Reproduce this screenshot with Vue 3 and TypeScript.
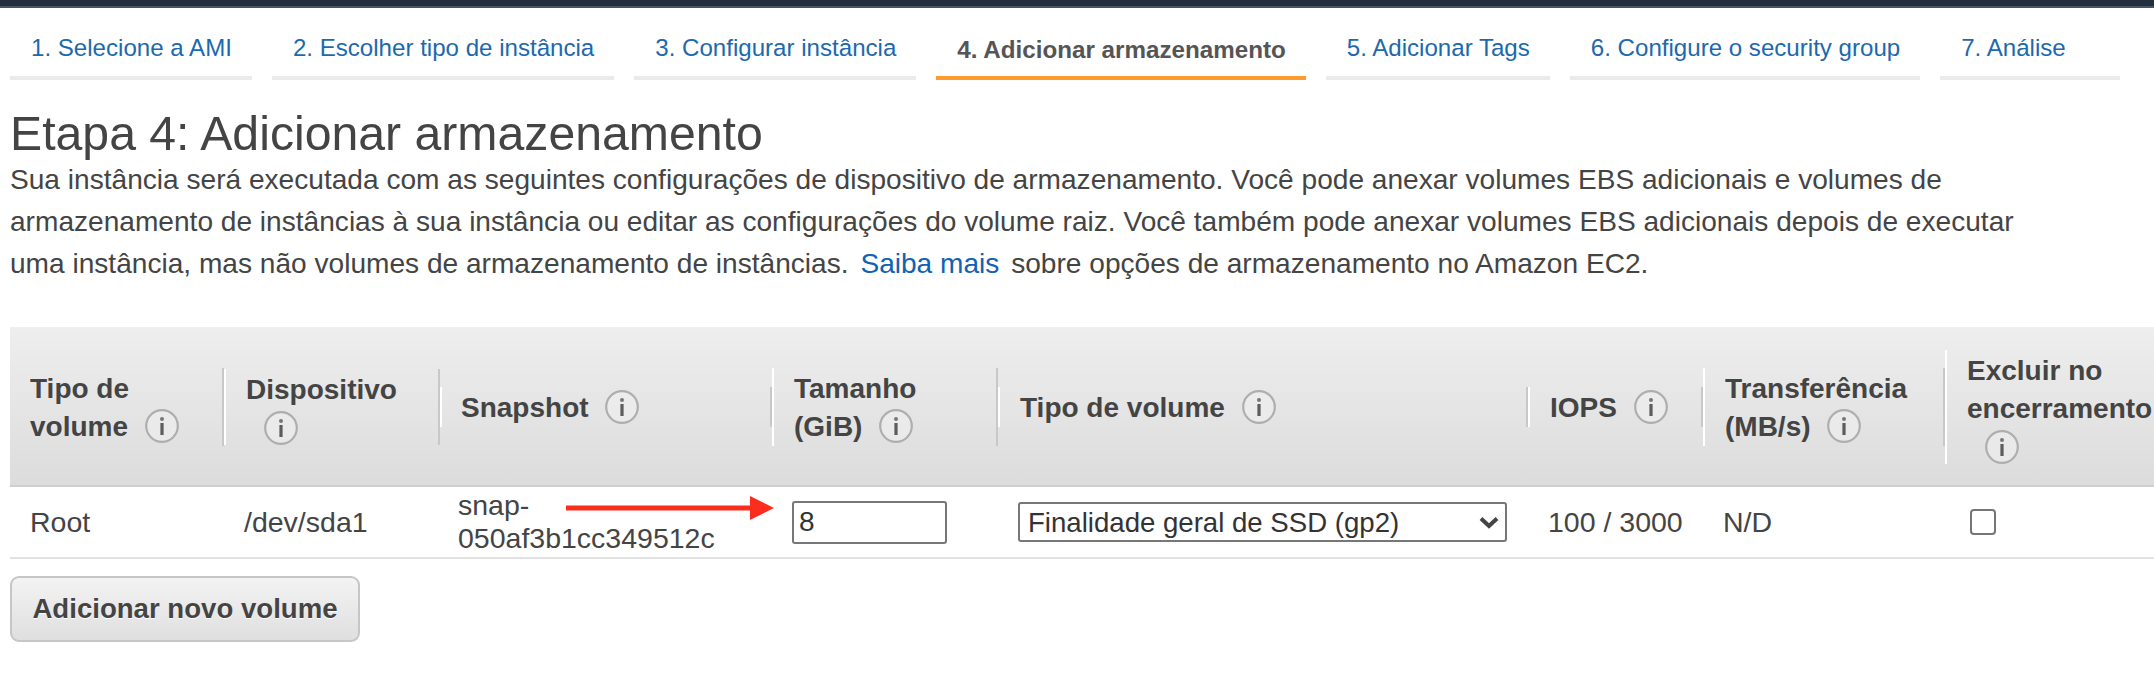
<script setup lang="ts">
interface Tab {
  label: string;
  active?: boolean;
}

interface Column {
  lines: string[];
  width: number;
  iconOwnLine?: boolean;
}

const tabs: Tab[] = [
  { label: '1. Selecione a AMI' },
  { label: '2. Escolher tipo de instância' },
  { label: '3. Configurar instância' },
  { label: '4. Adicionar armazenamento', active: true },
  { label: '5. Adicionar Tags' },
  { label: '6. Configure o security group' },
  { label: '7. Análise' }
];

const columns: Column[] = [
  { lines: ['Tipo de', 'volume'], width: 214 },
  { lines: ['Dispositivo'], width: 216, iconOwnLine: true },
  { lines: ['Snapshot'], width: 332 },
  { lines: ['Tamanho', '(GiB)'], width: 226 },
  { lines: ['Tipo de volume'], width: 530 },
  { lines: ['IOPS'], width: 175 },
  { lines: ['Transferência', '(MB/s)'], width: 242 },
  { lines: ['Excluir no', 'encerramento'], width: 240, iconOwnLine: true }
];
</script>

<template>
  <div class="page">
    <div class="topbar"></div>

    <nav class="tabs">
      <a v-for="tab in tabs" :key="tab.label" :class="['tab', { active: tab.active }]">{{ tab.label }}</a>
    </nav>

    <h1 class="title">Etapa 4: Adicionar armazenamento</h1>
    <p class="intro">
      Sua instância será executada com as seguintes configurações de dispositivo de armazenamento. Você pode anexar volumes EBS adicionais e volumes de<br />
      armazenamento de instâncias à sua instância ou editar as configurações do volume raiz. Você também pode anexar volumes EBS adicionais depois de executar<br />
      uma instância, mas não volumes de armazenamento de instâncias. <a class="link">Saiba mais</a> sobre opções de armazenamento no Amazon EC2.
    </p>

    <div class="table-wrap">
      <table class="volumes">
        <colgroup>
          <col v-for="col in columns" :key="col.lines[0]" :style="{ width: col.width + 'px' }" />
        </colgroup>
        <thead>
          <tr>
            <th v-for="col in columns" :key="col.lines[0]">
              <div class="th-inner">
                <template v-for="(line, i) in col.lines" :key="line">
                  <span class="th-line">
                    {{ line }}
                    <svg v-if="i === col.lines.length - 1 && !col.iconOwnLine" class="info" viewBox="0 0 34 34">
                      <circle cx="17" cy="17" r="15.8" fill="#f0f0f0" fill-opacity="0.55" stroke="#aeaeae" stroke-width="2.2" />
                      <circle cx="17" cy="10" r="2" fill="#777" />
                      <rect x="15.4" y="14" width="3.2" height="12" fill="#5c5c5c" />
                    </svg>
                  </span>
                </template>
                <span v-if="col.iconOwnLine" class="th-line icon-line">
                  <svg class="info" viewBox="0 0 34 34">
                    <circle cx="17" cy="17" r="15.8" fill="#f0f0f0" fill-opacity="0.55" stroke="#aeaeae" stroke-width="2.2" />
                    <circle cx="17" cy="10" r="2" fill="#777" />
                    <rect x="15.4" y="14" width="3.2" height="12" fill="#5c5c5c" />
                  </svg>
                </span>
              </div>
            </th>
          </tr>
        </thead>
        <tbody>
          <tr>
            <td class="c-type">Root</td>
            <td class="c-device">/dev/sda1</td>
            <td class="c-snap">snap-<br />050af3b1cc349512c</td>
            <td class="c-size"><input class="size-input" type="text" value="8" /></td>
            <td class="c-voltype">
              <div class="select-wrap">
                <select class="type-select">
                  <option>Finalidade geral de SSD (gp2)</option>
                </select>
                <svg class="chevron" width="20" height="13" viewBox="0 0 20 13">
                  <path d="M2 2.5 L10 10 L18 2.5" fill="none" stroke="#444" stroke-width="4" />
                </svg>
              </div>
            </td>
            <td class="c-iops">100 / 3000</td>
            <td class="c-through">N/D</td>
            <td class="c-delete"><input class="check" type="checkbox" /></td>
          </tr>
        </tbody>
      </table>

      <svg class="arrow" width="210" height="26" viewBox="0 0 210 26">
        <rect x="0" y="10.5" width="186" height="5" fill="#fa2d1e" />
        <polygon points="184,1 208,13 184,25" fill="#fa2d1e" />
      </svg>
    </div>

    <button class="add-btn" type="button">Adicionar novo volume</button>
  </div>
</template>

<style>
html,
body {
  margin: 0;
  background: #fff;
  overflow: hidden;
}
</style>

<style scoped>
.page {
  width: 2154px;
  height: 680px;
  overflow: hidden;
  font-family: "Liberation Sans", Arial, sans-serif;
  color: #444;
  background: #fff;
}

.topbar {
  height: 6px;
  background: #232f3e;
  border-bottom: 2px solid #4a5563;
}

.tabs {
  display: flex;
  gap: 20px;
  align-items: flex-end;
  height: 72px;
  padding-left: 10px;
}

.tab {
  box-sizing: border-box;
  min-width: 180px;
  height: 72px;
  padding: 26px 20px 0 21px;
  border-bottom: 4px solid #ebebeb;
  font-size: 24.1px;
  line-height: 28px;
  color: #1c69ad;
  white-space: nowrap;
}

.tab.active {
  padding: 28px 20px 0 21px;
  border-bottom-color: #ff9a2e;
  font-size: 24.2px;
  font-weight: 700;
  color: #555;
}

.title {
  margin: 27px 0 0;
  padding-left: 10px;
  font-size: 48.2px;
  line-height: 52px;
  font-weight: 400;
  color: #444;
}

.intro {
  margin: 0;
  padding-left: 10px;
  font-size: 28.1px;
  line-height: 42px;
  color: #444;
  white-space: nowrap;
}

.link {
  margin: 0 4px;
  color: #0f62b5;
}

.table-wrap {
  position: relative;
  margin: 42px 0 0 10px;
  width: 2144px;
}

.volumes {
  table-layout: fixed;
  width: 2175px;
  border-collapse: collapse;
}

.volumes thead tr {
  background: linear-gradient(#eeeeee, #dcdcdc);
}

.volumes th {
  height: 158px;
  padding: 0;
  border-bottom: 2px solid #cfcfcf;
  text-align: left;
  vertical-align: middle;
}

.th-inner {
  box-sizing: border-box;
  padding: 2px 20px 0;
  border-left: 2px solid #fff;
  border-right: 2px solid #c8c8c8;
  font-size: 28px;
  font-weight: 700;
  line-height: 38px;
  color: #444;
}

.volumes th:first-child .th-inner {
  border-left: 0;
}

.volumes th:nth-child(3) .th-inner {
  padding-left: 19px;
}

.th-line {
  display: block;
  white-space: nowrap;
}

.th-line:last-child {
  margin-bottom: -2px;
}

.icon-line {
  padding-left: 18px;
  line-height: 0;
  padding-top: 2px;
}

.info {
  width: 34px;
  height: 34px;
  margin-left: 9px;
  vertical-align: -7px;
}

.icon-line .info {
  margin-left: 0;
  vertical-align: top;
}

.volumes td {
  height: 70px;
  padding: 0 0 0 20px;
  border-bottom: 2px solid #e2e2e2;
  font-size: 28.5px;
  line-height: 33px;
  color: #444;
  white-space: nowrap;
}

.volumes td.c-snap {
  padding-left: 18px;
}

.size-input {
  display: block;
  box-sizing: border-box;
  width: 155px;
  height: 43px;
  padding: 0 5px;
  border: 2px solid #777;
  border-radius: 3px;
  font-family: inherit;
  font-size: 28px;
  color: #333;
  background: #fff;
}

.select-wrap {
  position: relative;
  width: 489px;
}

.type-select {
  display: block;
  box-sizing: border-box;
  width: 489px;
  height: 40px;
  padding: 0 8px;
  border: 2px solid #777;
  border-radius: 3px;
  appearance: none;
  font-family: inherit;
  font-size: 27.6px;
  color: #333;
  background: #fff;
}

.chevron {
  position: absolute;
  right: 8px;
  top: 14px;
}

.check {
  display: block;
  width: 26px;
  height: 26px;
  margin: 0 0 0 5px;
  appearance: none;
  box-sizing: border-box;
  border: 2px solid #767676;
  border-radius: 4px;
  background: #fff;
}

.arrow {
  position: absolute;
  left: 556px;
  top: 168px;
}

.add-btn {
  display: block;
  box-sizing: border-box;
  width: 350px;
  height: 66px;
  margin: 17px 0 0 10px;
  border: 2px solid #c6c6c6;
  border-radius: 9px;
  background: linear-gradient(#f3f3f3, #dfdfdf);
  font-family: inherit;
  font-size: 27.6px;
  font-weight: 700;
  color: #444;
  text-shadow: 0 1px 0 #fff;
}
</style>
